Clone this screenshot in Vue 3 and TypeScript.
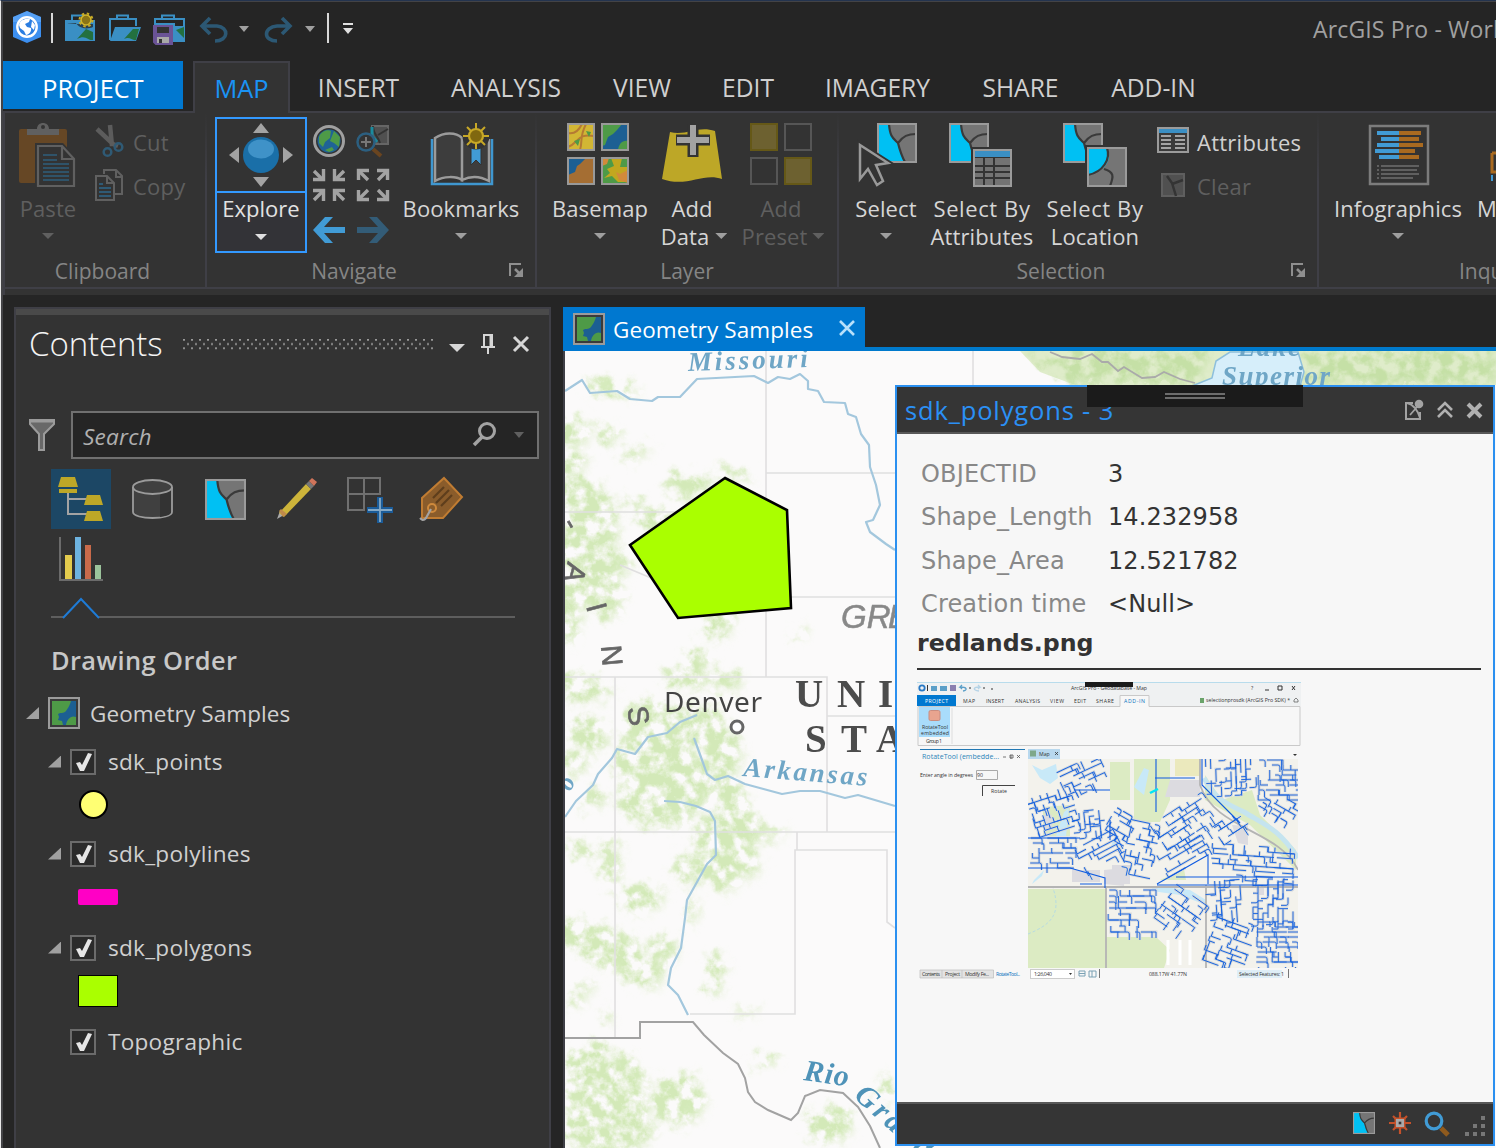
<script setup lang="ts">
interface LayerItem {
  name: string
  symbol?: 'point' | 'line' | 'polygon'
}

const tabs: { label: string; x: number }[] = [
  { label: 'INSERT', x: 137 },
  { label: 'ANALYSIS', x: 158 },
  { label: 'VIEW', x: 114 },
  { label: 'EDIT', x: 98 },
  { label: 'IMAGERY', x: 161 },
  { label: 'SHARE', x: 125 },
  { label: 'ADD-IN', x: 141 },
]

const layers: LayerItem[] = [
  { name: 'sdk_points', symbol: 'point' },
  { name: 'sdk_polylines', symbol: 'line' },
  { name: 'sdk_polygons', symbol: 'polygon' },
  { name: 'Topographic' },
]

const fields: [string, string][] = [
  ['OBJECTID', '3'],
  ['Shape_Length', '14.232958'],
  ['Shape_Area', '12.521782'],
  ['Creation time', '<Null>'],
]

// Small deterministic generator so the map looks the same on every load.
function makeRandom(seed: number): () => number {
  let s = seed
  return () => {
    s = (s * 1664525 + 1013904223) % 4294967296
    return s / 4294967296
  }
}

// Vegetation patches: cx, cy, rx, ry, rotation
const patches: number[][] = [
  [572, 432, 18, 14, 20], [608, 436, 14, 7, 0], [575, 462, 10, 14, -20], [612, 390, 26, 8, 10], [636, 454, 16, 5, -15],
  [585, 530, 34, 46, 0], [580, 500, 26, 22, 0], [598, 585, 22, 36, -30], [570, 610, 12, 34, 0], [612, 560, 24, 12, 20],
  [635, 505, 14, 6, 20], [655, 520, 18, 10, 10], [690, 485, 24, 12, 0], [735, 476, 18, 6, 10], [720, 625, 14, 16, 30],
  [582, 690, 34, 12, 5], [690, 677, 24, 14, 0], [697, 662, 10, 16, -10], [725, 682, 18, 10, 10], [590, 735, 22, 16, 30],
  [655, 722, 34, 22, 0], [700, 728, 32, 22, 0], [655, 765, 40, 30, 0], [725, 755, 18, 26, 0], [665, 800, 44, 28, 0],
  [690, 780, 34, 22, 0], [733, 800, 14, 24, -20], [740, 830, 22, 26, 0], [715, 838, 20, 20, 0], [725, 870, 18, 24, 10],
  [692, 870, 18, 14, 0], [765, 834, 20, 6, 0], [612, 865, 8, 30, 0], [596, 800, 14, 8, -20], [640, 900, 20, 14, 20],
  [658, 898, 8, 8, 0], [694, 910, 4, 16, 0], [580, 935, 30, 14, 12], [610, 950, 38, 18, 15], [640, 970, 26, 16, 20],
  [717, 974, 9, 22, 0], [588, 988, 8, 5, 0], [608, 1018, 5, 8, 0], [748, 1013, 12, 3, 0], [767, 1060, 12, 7, 0],
  [590, 1080, 28, 36, 20], [625, 1100, 24, 44, 0], [610, 1130, 46, 26, 0], [680, 1100, 26, 26, 0], [830, 1125, 24, 18, 0],
  [888, 1090, 8, 12, 0], [748, 865, 14, 14, 0], [585, 852, 18, 8, 20], [575, 1000, 14, 5, 0], [665, 950, 14, 14, 0],
  [800, 635, 8, 4, -20], [575, 765, 14, 10, 0],
]

interface Zone { x: number; y: number; w: number; h: number; a: number; step: number }
const zones: Zone[] = [
  { x: 1030, y: 792, w: 46, h: 40, a: -18, step: 5 },
  { x: 1030, y: 838, w: 46, h: 30, a: 0, step: 5 },
  { x: 1060, y: 762, w: 46, h: 30, a: -25, step: 5 },
  { x: 1076, y: 810, w: 30, h: 28, a: 84, step: 5 },
  { x: 1078, y: 838, w: 44, h: 28, a: -28, step: 5 },
  { x: 1108, y: 812, w: 26, h: 26, a: 30, step: 5 },
  { x: 1124, y: 822, w: 32, h: 54, a: 12, step: 6 },
  { x: 1154, y: 806, w: 64, h: 36, a: -33, step: 5 },
  { x: 1158, y: 842, w: 50, h: 22, a: -30, step: 5 },
  { x: 1212, y: 752, w: 42, h: 46, a: 88, step: 5 },
  { x: 1258, y: 760, w: 42, h: 36, a: 0, step: 5 },
  { x: 1216, y: 818, w: 32, h: 20, a: -33, step: 5 },
  { x: 1260, y: 796, w: 38, h: 22, a: 30, step: 5 },
  { x: 1210, y: 846, w: 84, h: 32, a: 4, step: 5 },
  { x: 1108, y: 890, w: 48, h: 46, a: 0, step: 6 },
  { x: 1160, y: 892, w: 42, h: 40, a: 35, step: 5 },
  { x: 1204, y: 886, w: 44, h: 30, a: 86, step: 5 },
  { x: 1208, y: 918, w: 44, h: 48, a: 20, step: 5 },
  { x: 1250, y: 886, w: 50, h: 36, a: 90, step: 5 },
  { x: 1256, y: 922, w: 44, h: 46, a: 0, step: 5 },
]

// Residential streets: winding runs that alternate along and across the zone's grain.
function buildStreets(zone: Zone, seed: number): string {
  const rnd = makeRandom(seed)
  const right = zone.x + zone.w
  const bottom = zone.y + zone.h
  let d = ''
  for (let y = zone.y; y < bottom; y += zone.step) {
    let x = zone.x + rnd() * 3
    while (x < right - 4) {
      const len = Math.min(5 + rnd() * 15, right - x)
      const pick = rnd()
      const s = zone.step
      const at = `M${x.toFixed(1)} ${y.toFixed(1)}`
      if (pick < 0.3) d += `${at}v${s}h${len.toFixed(1)}`
      else if (pick < 0.5) d += `${at}h${(len / 2).toFixed(1)}q2 0 2 2v${s}`
      else if (pick < 0.75) d += `${at}h${len.toFixed(1)}v${s}`
      else if (pick < 0.88) d += `${at}v${s * 2}`
      x += len * 0.85 + 1
    }
  }
  return d
}

const streets = zones.map((z, i) => ({
  d: buildStreets(z, 97 + i * 31),
  rot: `rotate(${z.a} ${z.x + z.w / 2} ${z.y + z.h / 2})`,
}))
</script>

<template>
  <div class="app">
    <svg class="defs" width="0" height="0">
      <symbol id="swatch" viewBox="0 0 40 40">
        <rect x="1" y="1" width="38" height="38" fill="#757575" />
        <path d="M1 1H12C13 14 17 16 21 21C22 28 25 33 28 39H1Z" fill="#00c0f3" />
        <path d="M12 1C13 14 16 15 21 20C23 28 24 32 28 39M21 20C26 13 31 11 39 11" fill="none" stroke="#3a3a3a" stroke-width="2.2" />
        <rect x="1" y="1" width="38" height="38" fill="none" stroke="#9b9b9b" stroke-width="2" />
      </symbol>
      <symbol id="mapicon" viewBox="0 0 32 32">
        <rect x="1" y="1" width="30" height="30" fill="#3a3a3a" stroke="#9b9b9b" stroke-width="2" />
        <rect x="4" y="4" width="24" height="24" fill="#1c5f93" />
        <path d="M4 4H23C22 8 20 11 18 14C15 17 13 15 10 17L11 20L10 23L14 24L15 28H4ZM28 20C23 18 19 22 18 28H28Z" fill="#4e9a47" />
      </symbol>
      <symbol id="launcher" viewBox="0 0 15 15">
        <path d="M1 13V1H12" fill="none" stroke="#8f8f8f" stroke-width="2" />
        <path d="M6 6L11 11" stroke="#8f8f8f" stroke-width="2.5" />
        <path d="M14 5V14H5Z" fill="#8f8f8f" />
      </symbol>
    </svg>

    <!-- Quick access bar -->
    <header class="titlebar">
      <svg class="qat" width="360" height="58" viewBox="3 2 360 58">
        <path d="M27 11L41 17V37L27 43L13 37V17Z" fill="#3c8ff0" />
        <path d="M27 11L41 17V22L13 22V17Z" fill="#6fb3fb" opacity=".5" />
        <circle cx="27" cy="27" r="9.7" fill="#2a7de1" stroke="#fff" stroke-width="2.4" />
        <path d="M19 25C20 20 25 18 30 19L29 22L25 24L27 27L31 28C32 31 29 35 26 35L24 31L20 28ZM32 21L35 25L34 30L31 27Z" fill="#fff" />
        <path d="M52 13V43M328 13V43" stroke="#d8d8d8" stroke-width="2" />
        <g>
          <path d="M65 20H95V41H65Z" fill="#3a8fc4" />
          <path d="M72 20V15.500H84V20" fill="none" stroke="#3a8fc4" stroke-width="2" />
          <path d="M67 23H76C79 28 86 30 93 27V24H78Z" fill="#262626" opacity=".75" />
          <path d="M77 39L86 29L93 32V40C88 41 86 34 77 39Z" fill="#23703f" />
          <circle cx="86" cy="20" r="5" fill="#8a7416" stroke="#d4b72a" stroke-width="1.6" />
          <circle cx="86" cy="20" r="6.500" fill="none" stroke="#c7ab26" stroke-width="2" stroke-dasharray="2.500 2.600" />
        </g>
        <path d="M110 40V19H136V26M117 19V15.500H128V19" fill="none" stroke="#3a8fc4" stroke-width="2" />
        <path d="M110 41L115 27H141L136 41Z" fill="#3a8fc4" />
        <path d="M124 39L133 29H139L136 40C132 41 130 36 124 39Z" fill="#23703f" />
        <path d="M155 24V19H184V41H174V24ZM162 19V15.500H174V19" fill="none" stroke="#3a8fc4" stroke-width="2" />
        <path d="M174 26H184V41H174Z" fill="#3a8fc4" /><path d="M176 30L184 27V38Z" fill="#23703f" />
        <path d="M154 26H172V44H156L154 42Z" fill="#6a5396" stroke="#6a5396" stroke-width="2" />
        <path d="M157 27H169V33H157Z" fill="#333" />
        <path d="M157 37H169V43H157Z" fill="#a9a9a9" /><path d="M159 39h3v4h-3z" fill="#333" />
        <g fill="none" stroke="#2c5874" stroke-width="3.600">
          <path d="M210 18L202 26L210 34M202 26H217C229 27 229 41 215 41" />
          <path d="M282 18L290 26L282 34M290 26H277C263 27 263 41 277 41" />
        </g>
        <path d="M239 26H249L244 32ZM305 26H315L310 32Z" fill="#a0a0a0" />
        <path d="M343 23H353V25H343ZM343 28H353L348 34Z" fill="#e0e0e0" />
      </svg>
      <span class="apptitle">ArcGIS Pro - Workshop</span>
    </header>

    <nav class="tabs">
      <div class="tab project"><span>PROJECT</span></div>
      <div class="tab active"><span>MAP</span></div>
      <div v-for="t in tabs" :key="t.label" class="tab" :style="{ width: t.x + 'px' }"><span>{{ t.label }}</span></div>
    </nav>

    <!-- Ribbon -->
    <section class="ribbon">
      <div class="group g-clip">
        <div class="tools">
          <div class="big off w86">
            <svg width="60" height="68" viewBox="20 122 60 68">
              <rect x="21" y="129" width="48" height="54" rx="2" fill="#664725" />
              <path d="M29 129H39C39 121 51 121 51 129H61V135H29Z" fill="#606060" /><circle cx="45" cy="127" r="2" fill="#333" />
              <path d="M37 143H65L78 157V188H37Z" fill="#333" />
              <path d="M40 146H64L76 159V186H40ZM64 146V159H76" fill="none" stroke="#606060" stroke-width="2.200" />
              <path d="M45 155H59M45 160H59M45 164H71M45 168H71M45 172H71M45 176H71M45 180H71" stroke="#2f5369" stroke-width="2" />
            </svg>
            <span>Paste</span><i class="arr" />
          </div>
          <div class="col">
            <div class="small off">
              <svg width="34" height="36" viewBox="94 124 34 36">
                <path d="M110 125L112 146M97 129L113 144L118 146" stroke="#5c5c5c" stroke-width="4.500" fill="none" />
                <circle cx="107.500" cy="152" r="3.800" fill="none" stroke="#2f5a75" stroke-width="2.500" /><circle cx="118.500" cy="147" r="3.800" fill="none" stroke="#2f5a75" stroke-width="2.500" />
              </svg>
              <span>Cut</span>
            </div>
            <div class="small off">
              <svg width="34" height="36" viewBox="94 168 34 36">
                <path d="M104 174V170H116L122 176V194H114M116 170V177H122" fill="none" stroke="#606060" stroke-width="2" />
                <path d="M96 176H107L114 183V200H96ZM107 176V183H114" fill="#333" stroke="#606060" stroke-width="2" />
                <path d="M99 184H103M99 188H111M99 192H111M99 196H111" stroke="#2f5a75" stroke-width="2" />
              </svg>
              <span>Copy</span>
            </div>
          </div>
        </div>
        <div class="glabel">Clipboard</div>
      </div>

      <div class="group g-nav">
        <div class="tools">
          <div class="explore">
            <div class="extop">
              <svg width="68" height="68" viewBox="227 121 68 68">
                <path d="M261 123L269 133H253ZM261 187L269 177H253ZM229 155L239 147V163ZM293 155L283 147V163Z" fill="#a3a3a3" />
                <circle cx="261" cy="155" r="18" fill="#1a6fa8" /><ellipse cx="261" cy="149" rx="13" ry="9.500" fill="#3f92c8" />
              </svg>
            </div>
            <span>Explore</span><i class="arr lit" />
          </div>
          <svg class="navgrid" width="88" height="134" viewBox="307 119 88 134">
            <circle cx="329" cy="141" r="14.500" fill="#333" stroke="#a0a0a0" stroke-width="3" />
            <circle cx="329" cy="141" r="11.500" fill="#1f6396" />
            <path d="M319 137C321 131 328 129 331 131L330 138L325 142L323 147L319 143ZM334 131L340 137L339 147L334 143L330 141ZM325 150L332 147L334 150L329 152Z" fill="#4e9a47" />
            <rect x="372" y="126" width="16" height="18" fill="#505050" stroke="#666" stroke-width="2" />
            <path d="M373 126C373 134 378 136 380 143M378 135L388 129" stroke="#333" stroke-width="2" fill="none" /><path d="M372 127V136L377 142" stroke="#1b8b9e" stroke-width="3" fill="none" />
            <path d="M373 149L381 156" stroke="#6a4520" stroke-width="4" />
            <circle cx="366" cy="142" r="8.500" fill="#333" stroke="#2c5f80" stroke-width="2.500" /><path d="M366 137V147M361 142H371" stroke="#777" stroke-width="2" />
            <g fill="none" stroke="#a3a3a3" stroke-width="3.400">
              <path d="M314 171L322 179M344 171L336 179M314 200L322 192M344 200L336 192" />
              <path d="M323.500 169V179.500H313M334.500 169V179.500H345M323.500 201V190.500H313M334.500 201V190.500H345" />
              <path d="M368 180L360 172M378 180L386 172M368 190L360 198M378 190L386 198" />
              <path d="M358.500 180V170.500H369M387.500 180V170.500H377M358.500 190V199.500H369M387.500 190V199.500H377" />
            </g>
            <path d="M313 230L325 217H333L324 227H345V233H324L333 243H325Z" fill="#419bd5" />
            <path d="M389 230L377 217H369L378 227H357V233H378L369 243H377Z" fill="#335c77" />
          </svg>
          <div class="big w132">
            <svg width="66" height="68" viewBox="428 122 66 68">
              <path d="M432 139V184H492V139" fill="none" stroke="#3f97d0" stroke-width="2.500" />
              <path d="M435 181V138C444 132 456 132 462 138V180C456 176 444 176 435 181ZM462 138V180C470 176 480 176 489 181V139" fill="#3d3d3d" stroke="#9b9b9b" stroke-width="2.500" />
              <path d="M471 146H481V165L476 160L471 165Z" fill="#419bd5" stroke="#333" stroke-width="1" />
              <circle cx="476" cy="136" r="10" fill="none" stroke="#333" stroke-width="7" />
              <path d="M476 123V149M463 136H489M467 127L485 145M485 127L467 145" stroke="#c7a827" stroke-width="2" /><circle cx="476" cy="136" r="7" fill="#80680f" stroke="#c7a827" stroke-width="2.200" />
            </svg>
            <span>Bookmarks</span><i class="arr" />
          </div>
        </div>
        <div class="glabel nav">Navigate<svg class="launch" width="15" height="15"><use href="#launcher" /></svg></div>
      </div>

      <div class="group g-layer">
        <div class="tools">
          <div class="big w126">
            <svg width="66" height="68" viewBox="567 122 66 68">
              <rect x="568" y="124" width="26" height="26" fill="#d2b634" /><path d="M568 133C577 135 581 126 582 124M568 147C579 143 577 133 594 136M580 150C583 140 579 138 586 124" stroke="#b57a33" stroke-width="2" fill="none" /><path d="M586 131L591 132L589 137ZM574 141L580 139L578 146Z" fill="#4e9a47" />
              <rect x="602" y="124" width="26" height="26" fill="#1c5f93" /><path d="M602 124H622L617 130L613 134L608 137L605 145L602 146ZM628 141C622 140 619 144 618 150H628Z" fill="#4e9a47" />
              <rect x="568" y="158" width="26" height="26" fill="#a56e33" /><path d="M568 158H586L580 164L577 166L575 172L568 175Z" fill="#1c5f93" />
              <rect x="602" y="158" width="26" height="26" fill="#4e9a47" /><path d="M611 158L614 166L607 169L610 173L604 178L612 176L618 182H628V167L620 167L622 158Z" fill="#c2a71f" /><path d="M602 158H609L607 164L602 166ZM628 170L620 174L616 172L619 180L628 183Z" fill="#d28a3a" />
              <path d="M568 124H594V150H568ZM602 124H628V150H602ZM568 158H594V184H568ZM602 158H628V184H602Z" fill="none" stroke="#999" stroke-width="2" />
            </svg>
            <span>Basemap</span><i class="arr" />
          </div>
          <div class="big w62 adddata">
            <svg width="66" height="68" viewBox="660 122 66 68">
              <path d="M671 132C688 136 699 125 716 131L723 179C704 172 688 188 663 179Z" fill="#bda727" />
              <path d="M694 124V157M677 140H711" stroke="#333" stroke-width="11" /><path d="M694 125V155M678 140H710" stroke="#a3a3a3" stroke-width="6" />
            </svg>
            <span>Add</span><span class="line">Data<i class="arr" /></span>
          </div>
          <div class="big off w112 adddata">
            <svg width="66" height="68" viewBox="747 122 66 68">
              <rect x="750" y="124" width="26" height="26" fill="#6d6130" stroke="#655817" stroke-width="2" /><rect x="784" y="124" width="26" height="26" fill="#333" stroke="#565656" stroke-width="2" />
              <rect x="750" y="158" width="26" height="26" fill="#333" stroke="#565656" stroke-width="2" /><rect x="784" y="158" width="26" height="26" fill="#6d6130" stroke="#655817" stroke-width="2" />
            </svg>
            <span>Add</span><span class="line">Preset<i class="arr" /></span>
          </div>
        </div>
        <div class="glabel layer-l">Layer</div>
      </div>

      <div class="group g-sel">
        <div class="tools">
          <div class="big w94">
            <svg width="66" height="68" viewBox="853 122 66 68">
              <use href="#swatch" x="877" y="123" width="40" height="40" />
              <path d="M860 145L888 163L877 165L885 181L877 187L868 172L860 180Z" fill="#333" stroke="#333" stroke-width="6" />
              <path d="M860 145L888 163L876 165L883 181L877 185L868 169L860 179Z" fill="#333" stroke="#999" stroke-width="2.500" />
            </svg>
            <span>Select</span><i class="arr" />
          </div>
          <div class="big w98">
            <svg width="66" height="68" viewBox="949 122 66 68">
              <use href="#swatch" x="949" y="123" width="40" height="40" />
              <rect x="971" y="147" width="43" height="43" fill="#333" /><rect x="974" y="150" width="37" height="36" fill="#737373" stroke="#9b9b9b" stroke-width="2" />
              <rect x="975" y="151" width="35" height="6" fill="#3a8fc4" /><path d="M984 158V185M994 158V185M975 166H1010M975 172H1010M975 178H1010" stroke="#333" stroke-width="2" /><path d="M975 157.500H1010" stroke="#333" />
            </svg>
            <span class="sb">Select By</span><span class="line">Attributes</span>
          </div>
          <div class="big w126 loc">
            <svg width="66" height="68" viewBox="1062 122 66 68">
              <use href="#swatch" x="1063" y="123" width="40" height="40" />
              <rect x="1085" y="145" width="43" height="43" fill="#333" /><rect x="1088" y="148" width="38" height="38" fill="#757575" />
              <path d="M1088 148H1106C1114 157 1105 173 1088 174Z" fill="#00c0f3" /><path d="M1107 148C1111 159 1103 172 1088 175M1104 169C1114 172 1114 176 1110 186" fill="none" stroke="#3a3a3a" stroke-width="2.200" />
              <rect x="1088" y="148" width="38" height="38" fill="none" stroke="#9b9b9b" stroke-width="2" />
            </svg>
            <span class="sb">Select By</span><span class="line">Location</span>
          </div>
          <div class="col">
            <div class="small attrs">
              <svg width="34" height="36" viewBox="1157 122 34 36">
                <rect x="1158" y="126" width="30" height="24" fill="#3a3a3a" stroke="#9b9b9b" stroke-width="2" /><rect x="1159" y="127" width="28" height="4" fill="#3a8fc4" />
                <path d="M1161 134H1171M1161 138H1171M1161 142H1171M1161 146H1171M1175 134H1185M1175 138H1185M1175 142H1185M1175 146H1185" stroke="#a3a3a3" stroke-width="2" />
              </svg>
              <span>Attributes</span>
            </div>
            <div class="small off">
              <svg width="34" height="36" viewBox="1157 168 34 36">
                <rect x="1162" y="174" width="22" height="22" fill="#505050" stroke="#5f5f5f" stroke-width="2" /><path d="M1167 176L1172 183L1176 196M1172 184L1183 180" fill="none" stroke="#343434" stroke-width="2.500" />
              </svg>
              <span>Clear</span>
            </div>
          </div>
        </div>
        <div class="glabel sel">Selection<svg class="launch" width="15" height="15"><use href="#launcher" /></svg></div>
      </div>

      <div class="group g-inq">
        <div class="tools">
          <div class="big w158">
            <svg width="66" height="68" viewBox="1365 122 66 68">
              <rect x="1370" y="126" width="58" height="58" fill="none" stroke="#7c7c7c" stroke-width="2.500" />
              <path d="M1377 133H1399M1381 139H1399M1377 145H1399M1375 151H1399M1379 157H1399" stroke="#419bd5" stroke-width="4" />
              <path d="M1399 133H1421M1399 139H1419M1399 145H1423M1399 151H1415M1399 157H1419" stroke="#a96a20" stroke-width="4" />
              <path d="M1377 166H1379M1377 170H1379M1377 174H1379M1377 178H1379M1381 166H1419M1381 170H1417M1381 174H1419M1381 178H1413" stroke="#606060" stroke-width="2" />
            </svg>
            <span>Infographics</span><i class="arr" />
          </div>
          <div class="big measure">
            <svg width="20" height="68" viewBox="1490 122 20 68"><path d="M1492 153V172H1520M1492 153H1520" stroke="#a96a20" stroke-width="3" fill="none" /><path d="M1491 178H1493M1496 178H1500" stroke="#419bd5" stroke-width="6" /></svg>
            <span>Measure</span>
          </div>
        </div>
        <div class="glabel inq">Inquiry</div>
      </div>
    </section>

    <main class="workspace">
      <!-- Contents pane -->
      <aside class="contents">
        <div class="grip" />
        <div class="phead">
          <h2>Contents</h2>
          <svg class="dots" width="252" height="12">
            <defs><pattern id="dot" width="8" height="8.400" patternUnits="userSpaceOnUse"><rect width="2" height="1.700" fill="#9a9a9a" /><rect x="4" y="4.200" width="2" height="1.700" fill="#9a9a9a" /></pattern></defs>
            <rect width="252" height="11" fill="url(#dot)" />
          </svg>
          <svg class="pbtns" width="84" height="26" viewBox="448 332 84 26">
            <path d="M449 344H465L457 352Z" fill="#d6d6d6" />
            <path d="M484 346V335H492V346M481 347H495M488 347V354" fill="none" stroke="#d6d6d6" stroke-width="2" /><path d="M491 335V346" stroke="#d6d6d6" stroke-width="3" />
            <path d="M514 337L528 351M528 337L514 351" stroke="#d6d6d6" stroke-width="3" />
          </svg>
        </div>
        <div class="searchrow">
          <svg width="28" height="34" viewBox="28 418 28 34">
            <path d="M30 420H54V424L44 434V450H39V434L30 424Z" fill="#686868" stroke="#9b9b9b" stroke-width="2" /><path d="M29 421H55" stroke="#9b9b9b" stroke-width="3" />
          </svg>
          <div class="search">
            <em>Search</em>
            <svg width="56" height="28" viewBox="471 421 56 28">
              <circle cx="487" cy="431" r="7.500" fill="none" stroke="#a3a3a3" stroke-width="3" /><path d="M482 437L474 445" stroke="#a3a3a3" stroke-width="3.500" /><path d="M514 432H524L519 438Z" fill="#606060" />
            </svg>
          </div>
        </div>
        <div class="views">
          <div class="view on">
            <svg width="60" height="60" viewBox="51 469 60 60">
              <path d="M68 493V514H90M68 499H88" fill="none" stroke="#a3a3a3" stroke-width="2" />
              <path d="M61 477H75L78 487H58Z M59 489H77V493H59Z M87 495H100L103 505H84Z M87 511H100L103 521H84Z" fill="#bda727" />
            </svg>
          </div>
          <div class="view">
            <svg width="60" height="60" viewBox="123 469 60 60">
              <path d="M133 487V512C133 520 172 520 172 512V487" fill="#404040" stroke="#9b9b9b" stroke-width="1.800" /><path d="M160 493V517C168 516 171 514 171 512V488Z" fill="#333" /><ellipse cx="152.500" cy="487" rx="19.500" ry="7" fill="#404040" stroke="#9b9b9b" stroke-width="1.800" />
            </svg>
          </div>
          <div class="view"><svg width="41" height="41"><use href="#swatch" width="41" height="41" /></svg></div>
          <div class="view">
            <svg width="60" height="60" viewBox="268 469 60 60">
              <path d="M277 519L280 511L284 515Z" fill="#aaa" /><path d="M279 513L306 484L311 489L284 517Z" fill="#cdb43a" /><path d="M279 511L281 509L287 514L283 517Z" fill="#c08a4a" />
              <path d="M306 484L309 481L314 486L311 489Z" fill="#777" /><path d="M309 481L312 478L317 482L314 486Z" fill="#d0745a" />
            </svg>
          </div>
          <div class="view">
            <svg width="60" height="60" viewBox="340 469 60 60">
              <path d="M348 478H380V494H348V510H364V478M380 494H381" fill="none" stroke="#707070" stroke-width="2" /><path d="M348 477V511" stroke="#707070" stroke-width="2" />
              <path d="M380 497V523M367 510H393" stroke="#1b5c99" stroke-width="6" /><path d="M380 498V522M368 510H392" stroke="#86a9c5" stroke-width="1.800" />
            </svg>
          </div>
          <div class="view">
            <svg width="60" height="60" viewBox="412 469 60 60">
              <path d="M444 478L462 497L443 518H422V498Z" fill="#8a5c2b" stroke="#c07c32" stroke-width="2" />
              <path d="M433 498L444 487M436 503L449 490M441 506L452 495" stroke="#5e3e1c" stroke-width="2.200" />
              <circle cx="432" cy="508" r="4" fill="#8a5c2b" stroke="#cf8a3c" stroke-width="2" /><path d="M431 509L426 518C423 522 421 519 420 518" stroke="#a3a3a3" stroke-width="2.200" fill="none" />
            </svg>
          </div>
          <div class="view">
            <svg width="60" height="60" viewBox="51 529 60 60">
              <path d="M60 537V580H103" fill="none" stroke="#6b6b6b" stroke-width="2" />
              <path d="M65 555H72V579H65Z" fill="#e3cb4d" /><path d="M75 537H81V579H75Z" fill="#6db3e0" /><path d="M85 545H91V579H85Z" fill="#c96a4a" /><path d="M95 565H101V579H95Z" fill="#9bc39b" />
            </svg>
          </div>
        </div>
        <svg class="caret" width="464" height="24" viewBox="51 596 464 24">
          <path d="M51 617H64M99 617H515" stroke="#5e5e5e" stroke-width="2" /><path d="M63 618L81 599L99 618" fill="none" stroke="#1e7bd6" stroke-width="2" />
        </svg>
        <h3>Drawing Order</h3>
        <div class="mapnode">
          <i class="tri" /><svg width="32" height="32"><use href="#mapicon" width="32" height="32" /></svg><span>Geometry Samples</span>
        </div>
        <div v-for="l in layers" :key="l.name" class="layer" :class="{ tight: l.symbol === 'point' }">
          <div class="lrow">
            <i class="tri" :class="{ hidden: !l.symbol }" />
            <svg class="check" width="26" height="26"><rect x="1" y="1" width="24" height="24" fill="#2b2b2b" stroke="#6b6b6b" stroke-width="2" /><path d="M6 14L10 13L12 16L18 4L22 5L14 22H10Z" fill="#e6e6e6" /></svg>
            <span>{{ l.name }}</span>
          </div>
          <div v-if="l.symbol" class="sym" :class="l.symbol"><b /></div>
        </div>
      </aside>

      <!-- Map view -->
      <section class="doc">
        <div class="dochead">
          <div class="doctab">
            <svg width="32" height="32"><use href="#mapicon" width="32" height="32" /></svg>
            <span>Geometry Samples</span>
            <svg width="18" height="18" viewBox="0 0 18 18"><path d="M2 1L16 15M16 1L2 15" stroke="#b8e0fb" stroke-width="2.600" /></svg>
          </div>
        </div>
        <div class="mapview">
          <svg width="931" height="797" viewBox="565 351 931 797">
            <defs>
              <filter id="veg" x="-5%" y="-5%" width="110%" height="110%">
                <feTurbulence type="fractalNoise" baseFrequency=".075" numOctaves="4" seed="7" result="n" />
                <feColorMatrix in="n" type="matrix" values="0 0 0 0 0  0 0 0 0 0  0 0 0 0 0  3 2 0 0 -1.850" result="m" />
                <feGaussianBlur in="SourceGraphic" stdDeviation="4" result="b" />
                <feDisplacementMap in="b" in2="n" scale="26" xChannelSelector="R" yChannelSelector="G" result="d" />
                <feComposite in="d" in2="m" operator="in" />
              </filter>
            </defs>
            <rect x="565" y="351" width="931" height="797" fill="#fbfafa" />
            <g filter="url(#veg)" fill="#d3e9b8">
              <ellipse v-for="(p, i) in patches" :key="i" :cx="p[0]" :cy="p[1]" :rx="p[2]" :ry="p[3]" :transform="`rotate(${p[4]} ${p[0]} ${p[1]})`" />
            </g>
            <path d="M1020 351H1496V385H1075L1040 372Z" fill="#dfecca" />
            <g filter="url(#veg)" fill="#c5e0a6"><path d="M1030 351H1210L1200 385H1080ZM1300 351H1496V385H1310Z" /></g>
            <path d="M1192 386L1212 378L1216 361L1230 352H1298L1304 372L1300 386Z" fill="#d6eefa" stroke="#8dbfdc" stroke-width="1.500" />
            <path d="M1050 352L1062 357L1080 359L1092 354L1102 362L1108 362L1118 371L1124 367L1142 378L1155 377L1164 372L1180 379L1195 383" fill="none" stroke="#aaa" stroke-width="1.800" />
            <g fill="none" stroke="#e0dfe0" stroke-width="1.600">
              <path d="M766 351V677M766 473H895M565 512H700M620 565L680 590M790 597H895M565 677H827V832M827 716H895M615 677V1038M565 832H895M797 832V850M690 1014H795V850H887V922L895 928M973 351V385" />
            </g>
            <g fill="none" stroke="#a3c7dd" stroke-width="2.200" stroke-linejoin="round">
              <path d="M565 391L582 380L590 393L617 391L630 399L652 401L658 397L680 397L697 379L754 376L768 383L778 377L790 379L800 374L808 381V389L818 391L824 402L845 403L848 414L856 417L861 434L869 445L870 467L876 485L880 505L873 520L866 522L870 532L886 544L895 550" />
              <path d="M565 817L576 801L593 785L598 774L612 758L617 749L635 754L648 737L667 733L680 722L697 715" />
              <path d="M694 738L702 760L707 774L715 780L728 776L745 784L782 794L800 791H820L845 798L858 795L895 806" />
              <path d="M664 801L680 802L696 806L710 812L715 821L716 855L707 864L687 900L685 918L681 948L671 968L668 985L678 995L688 1015" />
            </g>
            <path d="M565 1038H640V1022H693L704 1035L723 1053L738 1064L745 1078L748 1092L755 1102L768 1110L791 1120L798 1113L805 1096L820 1090L843 1093L858 1107L870 1126L880 1148" fill="none" stroke="#a2a2a2" stroke-width="2" />
            <path d="M725 478L787 510L791 608L678 618L630 545Z" fill="#aaff00" stroke="#000" stroke-width="2.600" />
            <g class="river">
              <text x="688" y="369" textLength="120" transform="rotate(-2 748 366)">Missouri</text>
              <text x="743" y="776" font-size="27" textLength="124" transform="rotate(4.500 742 776)">Arkansas</text>
              <text x="803" y="1080" class="rio" textLength="45" transform="rotate(8 803 1080)">Rio</text>
              <text x="853" y="1097" class="rio" textLength="110" transform="rotate(42 853 1097)">Grande</text>
              <text x="1222" y="385" textLength="108">Superior</text>
              <text x="1238" y="356" textLength="62">Lake</text>
              <text x="570" y="792" font-size="24" transform="rotate(-60 570 792)">o</text>
            </g>
            <g class="range">
              <text x="568" y="561" transform="rotate(105 568 561)">A</text>
              <text x="586" y="606" transform="rotate(75 586 606)">I</text>
              <text x="601" y="646" transform="rotate(85 601 646)">N</text>
              <text x="627" y="708" transform="rotate(80 627 708)">S</text>
              <text x="561" y="524" transform="rotate(60 561 524)">-</text>
            </g>
            <text class="plains" x="841" y="628">GR</text><text class="plains" x="888" y="628">E</text>
            <text class="country" x="795" y="707">U</text><text class="country" x="837" y="707">N</text><text class="country" x="878" y="707">I</text>
            <text class="country" x="805" y="752">S</text><text class="country" x="841" y="752">T</text><text class="country" x="876" y="752">A</text>
            <text class="city" x="664" y="712" textLength="98">Denver</text>
            <circle cx="737" cy="727" r="6" fill="#fff" stroke="#666" stroke-width="3" />
          </svg>

          <!-- Identify popup floats over the map -->
          <div class="popup">
            <div class="pophead">
              <span>sdk_polygons - 3</span>
              <svg width="84" height="26" viewBox="1403 398 84 26">
                <path d="M1413 403H1406V419H1420V412" fill="none" stroke="#a3a3a3" stroke-width="2" /><path d="M1407 403Q1416 405 1420 418M1410 415L1417 407" fill="none" stroke="#a3a3a3" stroke-width="1.800" /><circle cx="1419" cy="404" r="4.300" fill="#a3a3a3" />
                <path d="M1438 410L1445 403L1452 410M1438 417L1445 410L1452 417" fill="none" stroke="#b0b0b0" stroke-width="2.600" />
                <path d="M1468 404L1481 417M1481 404L1468 417" stroke="#b0b0b0" stroke-width="4" />
              </svg>
              <div class="handle"><i /></div>
            </div>
            <div class="popbody">
              <div v-for="f in fields" :key="f[0]" class="field"><span>{{ f[0] }}</span><b>{{ f[1] }}</b></div>
              <div class="fname">redlands.png</div>
              <svg class="thumb" width="384" height="298" viewBox="917 682 384 298">
                <defs><clipPath id="mclip"><rect x="1028" y="759" width="270" height="209" /></clipPath></defs>
                <path d="M917 682H1301V706H917Z" fill="#eff1f2" /><path d="M917 682.500H1301" stroke="#b8dcec" />
                <path d="M917 695H956V706H917Z" fill="#0078d0" />
                <path d="M918 706.500H1120V695.500H1149V706.500H1300V745.500H918Z" fill="#f7f7f7" stroke="#c9c9c9" />
                <rect x="919" y="707" width="31" height="30" fill="#a9dcfb" /><rect x="929" y="710.500" width="11" height="10" rx="1.500" fill="#e8a48f" stroke="#c98d80" />
                <path d="M952 708V744" stroke="#ddd" />
                <g class="tiny">
                  <text x="1071" y="690" textLength="76">ArcGIS Pro - Geodatabase - Map</text>
                  <text x="925" y="703" class="inv" textLength="23">PROJECT</text><text x="963" y="703" textLength="12">MAP</text><text x="986" y="703" textLength="18">INSERT</text><text x="1015" y="703" textLength="25">ANALYSIS</text><text x="1050" y="703" textLength="14">VIEW</text><text x="1074" y="703" textLength="12">EDIT</text><text x="1096" y="703" textLength="18">SHARE</text><text x="1124" y="703" class="blue" textLength="21">ADD-IN</text>
                  <text x="1206" y="702" textLength="84">selectionprosdk (ArcGIS Pro SDK) *</text>
                  <text x="922" y="729" textLength="26">RotateTool</text><text x="921" y="735" textLength="28">embedded</text><text x="926" y="743" textLength="16">Group 1</text>
                  <text x="922" y="759" class="t7" textLength="77">RotateTool (embedde...</text>
                  <text x="920" y="777" textLength="53">Enter angle in degrees</text><text x="977" y="777">90</text><text x="991" y="793" textLength="16">Rotate</text>
                </g>
                <rect x="1085" y="682" width="48" height="5" fill="#1b1b1b" />
                <path d="M976.500 770.500H997.500V779.500H976.500Z" fill="none" stroke="#aaa" /><path d="M982.500 796V785.500H1015" fill="none" stroke="#444" />
                <path d="M920 749.500H1025" stroke="#2178b4" /><path d="M1003 757H1006M1011 755V759M1010 755H1013V758H1010ZM1017 755L1020 758M1020 755L1017 758" stroke="#555" fill="none" stroke-width=".8" />
                <path d="M931 686H937V691H931ZM940 686H947V691H940Z" fill="#5b9fc8" /><path d="M950 685H956V691H950Z" fill="#8a7fb0" />
                <g fill="none" stroke="#5b9fc8" stroke-width="1.300"><circle cx="922" cy="688" r="2.700" stroke="#2779c5" stroke-width="1.800" /><path d="M963 691C968 690 967 687 960 687L962 685M960 687L962 689" /><path d="M979 691C972 690 973 687 980 687L978 685M980 687L978 689" stroke="#b5d3e6" /></g>
                <path d="M927.500 685V691M1265 690H1269M1278 686H1282V690H1278ZM1292 686L1295 690M1295 686L1292 690M969 688H971M983 688H985M991 689H993" stroke="#333" fill="none" />
                <text class="tiny" x="1251" y="690">?</text><rect x="1200" y="698" width="4" height="5" fill="#6aa36a" /><path d="M1294 702H1298V700L1296 698L1294 700Z" fill="none" stroke="#555" stroke-width=".7" />
                <rect x="1028" y="749" width="32" height="10" fill="#b8d8ee" /><rect x="1030" y="750.500" width="6" height="6" fill="#7ea88a" /><text class="tiny" x="1039" y="756">Map</text><path d="M1055 752L1058 755M1058 752L1055 755" stroke="#333" stroke-width=".8" /><path d="M1293 754H1297L1295 756Z" fill="#333" />
                <g clip-path="url(#mclip)">
                  <rect x="1028" y="759" width="270" height="209" fill="#f3f2ec" />
                  <path d="M1028 889H1106V968H1028ZM1106 937L1156 937L1170 950L1164 968H1106ZM1134 759H1170V800L1160 822H1134ZM1043 807L1070 805V836H1043ZM1205 775L1222 800L1252 790L1260 815L1296 850V870L1250 825L1205 800ZM1160 880L1184 869L1186 880ZM1110 762H1130V800H1110Z" fill="#dcebc3" />
                  <path d="M1175 759H1200V776H1175Z" fill="#ebe9bd" />
                  <path d="M1170 780H1200V797H1165ZM1104 870L1125 868L1124 886L1104 884ZM1232 825L1248 826V845L1238 843ZM1112 865H1130V884H1112ZM1256 885H1264V895H1256ZM1044 815H1052V830H1044ZM1072 870H1100V882H1072Z" fill="#dcdbe0" />
                  <path d="M1032 765L1042 770L1056 764L1058 778L1050 784L1040 778ZM1064 812L1069 808L1066 836H1056ZM1114 838H1120V846H1111ZM1134 787L1144 768L1149 770L1144 795ZM1034 880L1044 870L1042 876L1032 884ZM1152 886L1190 890L1206 900L1206 905L1180 895L1152 891Z" fill="#c8e9f8" />
                  <path d="M1204 778C1216 800 1225 803 1244 812C1265 825 1278 828 1298 858" fill="none" stroke="#c5e4ef" stroke-width="5" />
                  <path d="M1028 934C1050 925 1062 915 1053 888" fill="none" stroke="#b7dbe2" stroke-dasharray="3 2" />
                  <path v-for="(s, i) in streets" :key="'w' + i" :d="s.d" :transform="s.rot" fill="none" stroke="#d5d8da" stroke-width="2.800" />
                  <path d="M1028 887H1298M1106 888V968M1200 759V785C1215 830 1280 830 1298 870M1206 885V968" fill="none" stroke="#b4b4b4" stroke-width="1.800" />
                  <path v-for="(s, i) in streets" :key="i" :d="s.d" :transform="s.rot" fill="none" stroke="#1763e0" stroke-width=".9" />
                  <path d="M1028 868H1070L1105 878V888M1156 759V812M1157 884L1208 855V884M1202 759V785L1240 823M1157 885H1298M1176 877H1298M1155 778H1195M1080 884H1102M1110 820V840M1074 790H1110M1028 838H1080" fill="none" stroke="#0f5be0" stroke-width="1.100" />
                  <path d="M1150 793L1158 789" stroke="#00e5f5" stroke-width="2.500" />
                  <path d="M1168 940V965M1180 940V965M1190 940V965" stroke="#fff" stroke-width="3" />
                </g>
                <g class="tiny">
                  <path d="M920 970H993.500V978H920ZM942 970V978M962 970V978" fill="#e3e3e3" stroke="#bbb" stroke-width=".7" />
                  <text x="922" y="976" textLength="18">Contents</text><text x="945" y="976" textLength="15">Project</text><text x="965" y="976" textLength="24">Modify Fe...</text><text x="996" y="976" class="blue" textLength="24">RotateTool...</text>
                  <rect x="1030.500" y="969.500" width="44" height="9" fill="#fff" stroke="#ccc" /><text x="1034" y="976" textLength="18">1:26,040</text><path d="M1069 973H1072L1070.500 975Z" />
                  <path d="M1079 971H1085V976H1079ZM1089 971H1096V977H1089ZM1079 973.500H1085M1092 971V977" fill="none" stroke="#7aa1b4" /><path d="M1099.500 969V978M1288.500 969V978" stroke="#777" />
                  <text x="1149" y="976" textLength="38">088.17W 41.77N</text><rect x="1237" y="970" width="45" height="8" fill="#dfeef7" /><text x="1239" y="976" textLength="45">Selected Features: 1</text>
                </g>
              </svg>
            </div>
            <div class="popfoot">
              <svg width="136" height="32" viewBox="1352 1108 136 32">
                <use href="#swatch" x="1353" y="1112" width="22" height="22" />
                <path d="M1400 1112V1134M1389 1123H1411M1393 1116L1407 1130M1407 1116L1393 1130" stroke="#c4512a" stroke-width="2.200" /><rect x="1394.500" y="1117.500" width="11" height="11" fill="#c4512a" /><rect x="1396" y="1119" width="8" height="8" fill="#a9a9a9" /><rect x="1398.700" y="1121.700" width="2.600" height="2.600" fill="#333" />
                <path d="M1441 1128L1448 1135" stroke="#8f5a1d" stroke-width="5" /><circle cx="1434" cy="1121" r="7.800" fill="none" stroke="#419bd5" stroke-width="3.200" />
                <path d="M1481 1116h4v4h-4zM1473 1124h4v4h-4zM1481 1124h4v4h-4zM1465 1132h4v4h-4zM1473 1132h4v4h-4zM1481 1132h4v4h-4z" fill="#777" />
              </svg>
            </div>
          </div>
        </div>
      </section>
    </main>
  </div>
</template>

<style>
body { background: #252525; }
</style>

<style scoped>
* { box-sizing: border-box; }
.app { width: 1496px; height: 1148px; overflow: hidden; display: flex; flex-direction: column; background: #252525; border-left: 1px solid #e8e8e8; border-top: 1px solid #24344f; box-shadow: inset 2px 0 #434346, inset 0 1px #434346; padding-left: 2px; font-family: "Open Sans", "Noto Sans", sans-serif; font-size: 22px; color: #d0d0d0; }
.defs { position: absolute; }
svg { display: block; flex: none; }
.titlebar { height: 60px; flex: none; display: flex; justify-content: space-between; }
.qat { margin-top: 1px; }
.apptitle { width: 183px; white-space: nowrap; line-height: 56px; font-size: 23px; letter-spacing: .15px; color: #a0a0a0; }
.tabs { height: 50px; flex: none; display: flex; position: relative; z-index: 1; }
.tab { display: flex; justify-content: center; font-size: 24.600px; line-height: 54px; white-space: nowrap; color: #d0d0d0; }
.tab.project { width: 180px; height: 48px; background: #0078d0; color: #fff; font-size: 25.200px; letter-spacing: .1px; }
.tab.active { width: 97px; height: 52px; margin-left: 10px; border: 2px solid #3f3f46; border-bottom: 0; background: #333; color: #1a93f5; line-height: 51px; font-size: 25.400px; }
.ribbon { height: 184px; flex: none; display: flex; border-top: 2px solid #3f3f46; border-left: 2px solid #3f3f46; background: linear-gradient(#333 0 174px, #3f3f46 174px 176px, #333 176px); }
.group { height: 174px; flex: none; display: flex; flex-direction: column; border-right: 2px solid #3f3f46; border-image: linear-gradient(#333, #3f3f46 40%) 1; }
.g-clip { width: 202px; } .g-nav { width: 330px; } .g-layer { width: 302px; } .g-sel { width: 480px; } .g-inq { width: 300px; }
.tools { display: flex; height: 142px; }
.glabel { height: 32px; line-height: 32px; text-align: center; color: #858585; font-size: 21px; padding-right: 5px; }
.glabel.layer-l { padding-right: 0; }
.glabel.nav, .glabel.sel { display: flex; justify-content: center; position: relative; padding-right: 34px; }
.glabel.inq { text-align: left; padding-left: 140px; }
.launch { position: absolute; right: 11px; top: 8px; }
.big { padding-top: 9px; display: flex; flex-direction: column; align-items: center; flex: none; line-height: 28px; white-space: nowrap; color: #d6d6d6; letter-spacing: .1px; }
.big > svg { margin-bottom: 4px; }
.big .line { display: flex; align-items: center; gap: 6px; }
.adddata .line { position: relative; left: 2px; }
.adddata.off .line { gap: 5px; }
.off, .big.off { color: #5f5f5f; }
.w86 { width: 86px; } .w132 { width: 132px; } .w126 { width: 126px; } .w62 { width: 62px; } .w112 { width: 112px; } .w94 { width: 94px; } .w98 { width: 98px; } .w158 { width: 158px; }
.w62 { margin-left: -2px; } .w112 { margin-left: 2px; }
.sb { letter-spacing: .6px; }
.big.loc { padding-left: 2px; }
.measure { align-items: flex-start; }
.measure > svg { margin-left: 13px; }
.arr { width: 12px; height: 6px; background: #9f9f9f; clip-path: polygon(0 0, 100% 0, 50% 100%); }
.big > .arr { margin-top: 11px; }
.off .arr { background: #606060; }
.arr.lit { background: #e0e0e0; }
.col { display: flex; flex-direction: column; padding-top: 7px; padding-left: 3px; }
.small { display: flex; align-items: center; height: 44px; gap: 5px; letter-spacing: .25px; }
.g-sel .col { padding-left: 0; } .g-sel .small { gap: 6px; }
.explore { width: 92px; height: 136px; margin: 4px 0 0 8px; border: 2px solid #3399ff; display: flex; flex-direction: column; align-items: center; line-height: 28px; color: #e2e2e2; background: linear-gradient(#333 0 72px, #333337 72px); }
.extop { width: 88px; height: 74px; flex: none; display: flex; justify-content: center; padding-top: 2px; border-bottom: 2px solid #3399ff; margin-bottom: 1px; }
.explore .arr { margin-top: 12px; }
.navgrid { margin-top: 6px; }
.workspace { flex: 1; display: flex; min-height: 0; padding: 12px 0 0 11px; }
.contents { width: 537px; flex: none; border: 2px solid #3f3f46; border-bottom: 0; background: #333; }
.grip { height: 6px; background: #4a4a4a; }
.phead { display: flex; align-items: center; height: 60px; padding-left: 13px; }
h2 { margin: -3px 0 0; width: 154px; font-weight: 300; font-size: 33px; letter-spacing: -.1px; color: #f4f4f4; }
.dots { margin-right: 13px; }
.searchrow { display: flex; align-items: center; margin-top: 36px; padding-left: 12px; gap: 15px; height: 48px; }
.search { width: 468px; height: 48px; border: 2px solid #707070; background: #252525; display: flex; align-items: center; justify-content: space-between; padding: 0 10px; }
.search em { font-size: 22.600px; letter-spacing: .2px; color: #b0b0b0; padding-top: 2px; }
.views { display: flex; flex-wrap: wrap; column-gap: 12.200px; width: 464px; margin: 10px 0 0 35px; }
.view { width: 60px; height: 60px; display: flex; align-items: center; justify-content: center; }
.view.on { background: #1c4765; }
.caret { margin: 7px 0 0 35px; }
h3 { margin: 24px 0 0 35px; height: 32px; line-height: 32px; font-size: 25.400px; letter-spacing: .4px; font-weight: 600; color: #c8c8c8; }
.mapnode { display: flex; align-items: center; height: 48px; margin: 13px 0 .500px; padding-left: 10px; }
.mapnode span { margin-left: 10px; font-size: 22.500px; letter-spacing: .1px; }
.tri { width: 13px; height: 12px; margin-right: 9px; background: #a0a0a0; clip-path: polygon(100% 0, 100% 100%, 0 100%); }
.tri.hidden { visibility: hidden; }
.layer { margin-bottom: 8px; }
.layer.tight { margin-bottom: 6px; }
.lrow { display: flex; align-items: center; height: 48px; padding-left: 32px; }
.lrow span { margin-left: 12px; font-size: 22.600px; letter-spacing: .25px; }
.sym { display: flex; align-items: center; height: 38px; padding-left: 62px; }
.sym b { display: block; }
.point b { width: 29px; height: 29px; border-radius: 50%; border: 2.500px solid #000; background: #ffff73; margin-left: 1px; }
.line b { width: 40px; height: 16px; border-radius: 2px; background: #ff00c5; }
.polygon b { width: 40px; height: 32px; border: 1.500px solid #000; background: #aaff00; }
.doc { flex: 1; min-width: 0; margin-left: 12px; display: flex; flex-direction: column; }
.dochead { height: 44px; flex: none; background: linear-gradient(transparent 40px, #007acc 40px); }
.doctab { width: 302px; height: 44px; background: #0078d0; display: flex; align-items: center; padding-left: 10px; color: #fff; }
.doctab span { width: 203px; margin: 0 22px 0 8px; white-space: nowrap; font-size: 22.500px; letter-spacing: .1px; }
.mapview { flex: 1; position: relative; border-left: 2px solid #3f3f46; overflow: hidden; }
.river { font-family: "Liberation Serif", serif; font-style: italic; font-weight: bold; font-size: 27px; fill: #6fa6c6; }
.rio { font-size: 30px; fill: #4f93b8; }
.range { font-family: "Liberation Sans", sans-serif; font-size: 29px; fill: #666; stroke: #666; stroke-width: .6px; }
.plains { font-family: "Liberation Sans", sans-serif; font-style: italic; font-size: 33px; fill: #888; stroke: #888; stroke-width: .5px; }
.country { font-family: "Liberation Serif", serif; font-weight: bold; font-size: 39px; fill: #4c4c4c; }
.city { font-family: "Noto Sans", sans-serif; font-size: 28px; fill: #444; }
.popup { position: absolute; left: 330px; top: 34px; width: 600px; height: 761px; border: 2px solid #2b90f0; background: #f7f7f7; display: flex; flex-direction: column; }
.pophead { height: 47px; flex: none; display: flex; align-items: center; justify-content: space-between; padding: 2px 6px 0 8px; background: #353535; border-bottom: 2px solid #585858; color: #2b90f5; font-size: 25.500px; letter-spacing: .85px; position: relative; }
.pophead > span { margin-top: -1px; }
.handle { position: absolute; left: 190px; top: -2px; width: 216px; height: 22px; background: #1b1b1b; display: flex; justify-content: center; }
.handle i { width: 60px; height: 6px; margin-top: 8px; border-top: 2px solid #6d6d6d; border-bottom: 2px solid #6d6d6d; }
.popbody { flex: 1; padding: 18px 12px 0 20px; font-family: "DejaVu Sans", sans-serif; font-size: 24px; }
.field { height: 43.400px; line-height: 44px; display: flex; padding-left: 4px; color: #888; }
.field span { width: 187px; white-space: nowrap; letter-spacing: .15px; }
.field b { font-weight: 400; color: #333; letter-spacing: .1px; }
.fname { height: 44px; line-height: 34px; font-size: 23.700px; font-weight: bold; color: #333; border-bottom: 2px solid #333; margin-bottom: 12px; }
.tiny { font-family: "Open Sans", sans-serif; font-size: 5.200px; fill: #333; }
.inv { fill: #fff; }
.blue { fill: #0b72c0; }
.t7 { font-size: 7px; fill: #2b84b8; }
.popfoot { height: 42px; flex: none; background: #353535; border-top: 2px solid #585858; display: flex; justify-content: flex-end; padding: 4px 5px 0 0; }
</style>
